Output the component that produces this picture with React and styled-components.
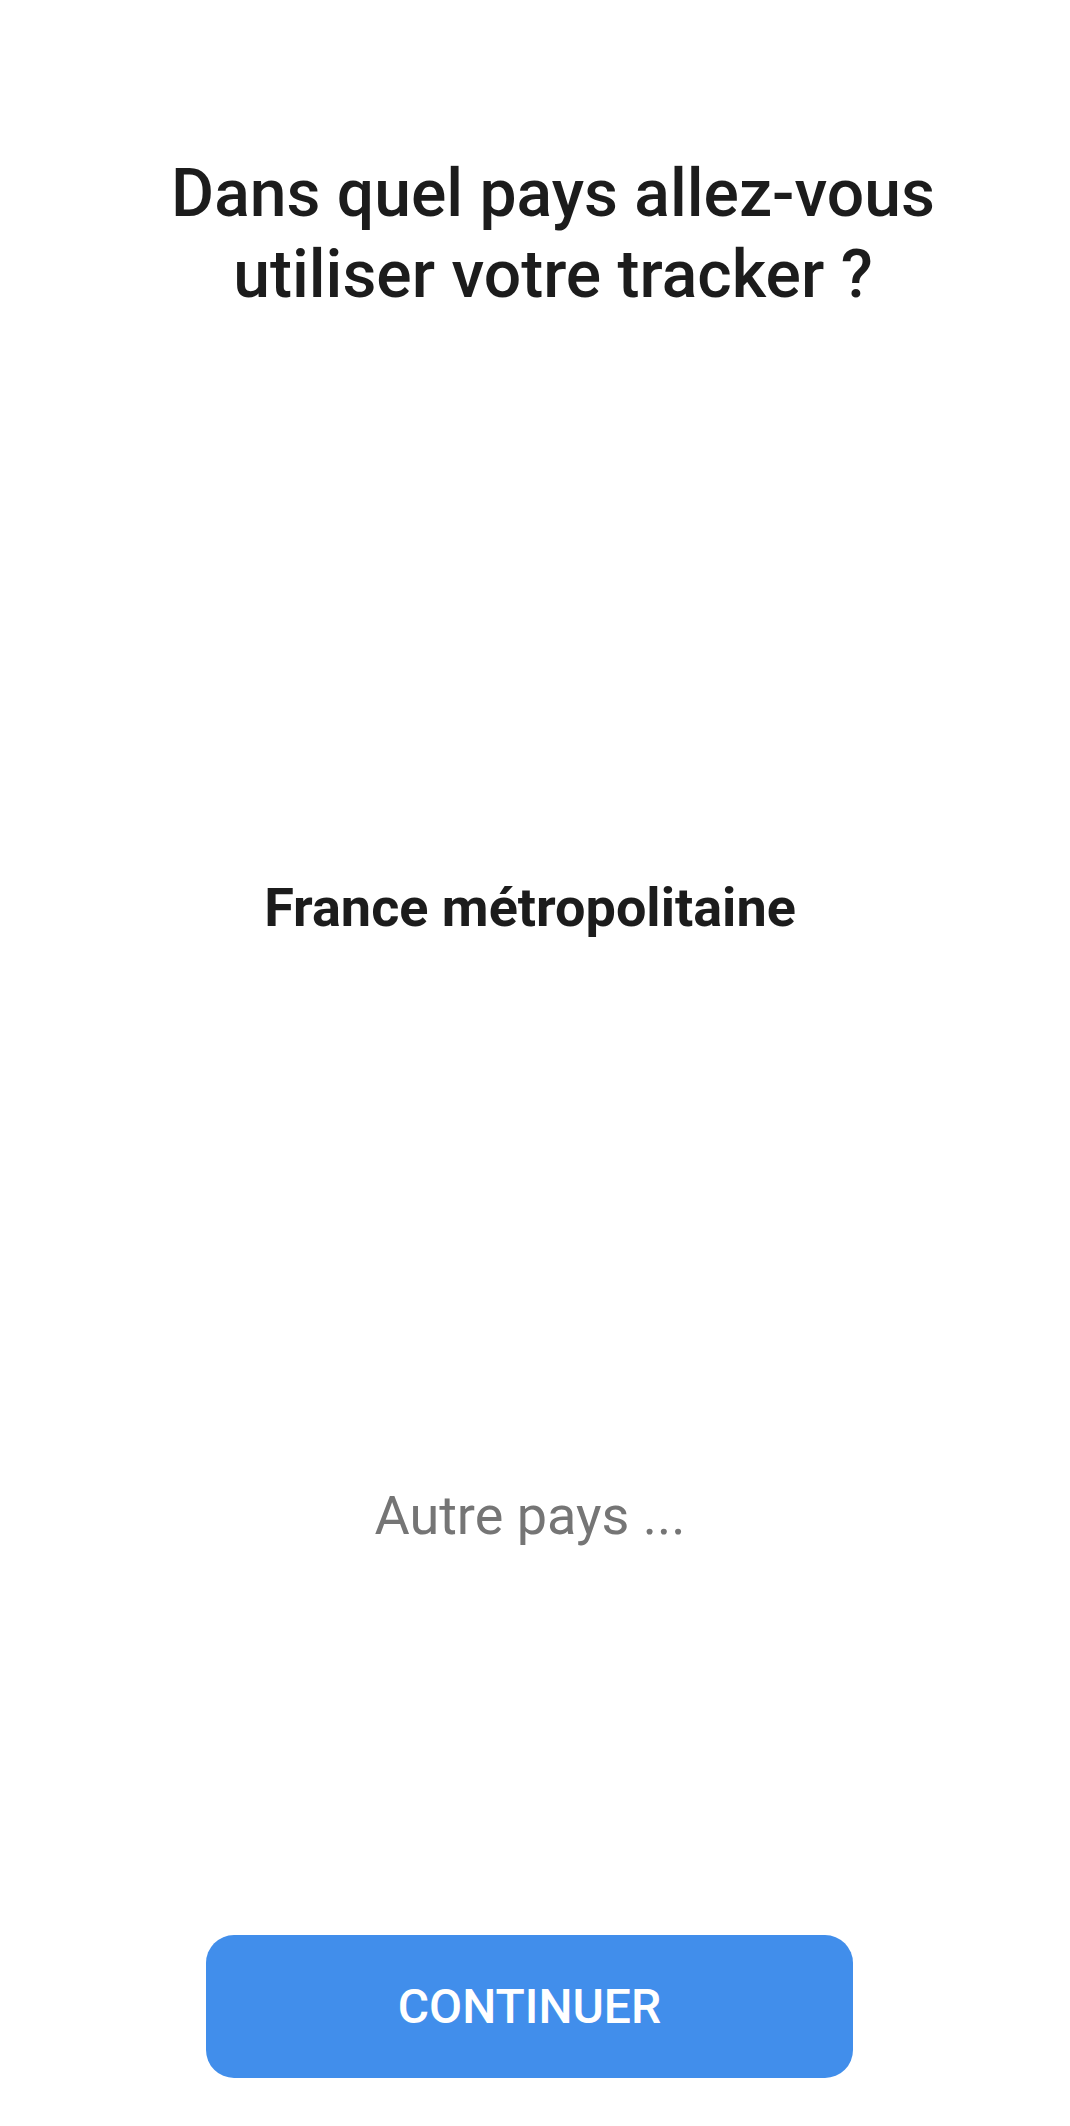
import React, { useState } from 'react';
import styled, { createGlobalStyle } from 'styled-components';

const GlobalStyle = createGlobalStyle`
    html, body {
        margin: 0;
        padding: 0;
        background: #ffffff;
    }
    body {
        font-family: Roboto, "Noto Sans", "Liberation Sans", sans-serif;
        -webkit-font-smoothing: antialiased;
    }
`;

const Screen = styled.div`
    width: 1070px;
    height: 2126px;
    display: flex;
    flex-direction: column;
    align-items: center;
    background: #ffffff;
    box-sizing: border-box;
`;

const Title = styled.h1`
    margin: 153px 0 0;
    padding-left: 36px;
    font-size: 66px;
    font-weight: 500;
    line-height: 81px;
    color: #1c1c1c;
    text-align: center;
`;

const OptionList = styled.div`
    display: flex;
    flex-direction: column;
    align-items: center;
    gap: 538px;
    margin-top: 558px;
    padding-right: 10px;
    flex: 1;
`;

const Option = styled.button`
    background: none;
    border: none;
    padding: 0;
    font-family: inherit;
    font-size: 54px;
    line-height: 70px;
    font-weight: ${({ selected }) => (selected ? 700 : 400)};
    color: ${({ selected }) => (selected ? '#1c1c1c' : '#757575')};
    cursor: pointer;
`;

const Footer = styled.div`
    padding-bottom: 48px;
    margin-left: -11px;
`;

const Button = styled.button`
    width: 647px;
    height: 143px;
    border: none;
    border-radius: 28px;
    background: #418eeb;
    color: #ffffff;
    font-family: inherit;
    font-size: 48px;
    font-weight: 500;
    display: flex;
    align-items: center;
    justify-content: center;
    cursor: pointer;
`;

const countries = ['France métropolitaine', 'Autre pays ...'];

export default function App() {
    const [selected, setSelected] = useState(0);

    return (
        <Screen>
            <GlobalStyle />
            <Title>
                Dans quel pays allez-vous
                <br />
                utiliser votre tracker ?
            </Title>
            <OptionList>
                {countries.map((c, i) => (
                    <Option key={c} selected={i === selected} onClick={() => setSelected(i)}>
                        {c}
                    </Option>
                ))}
            </OptionList>
            <Footer>
                <Button>CONTINUER</Button>
            </Footer>
        </Screen>
    );
}
